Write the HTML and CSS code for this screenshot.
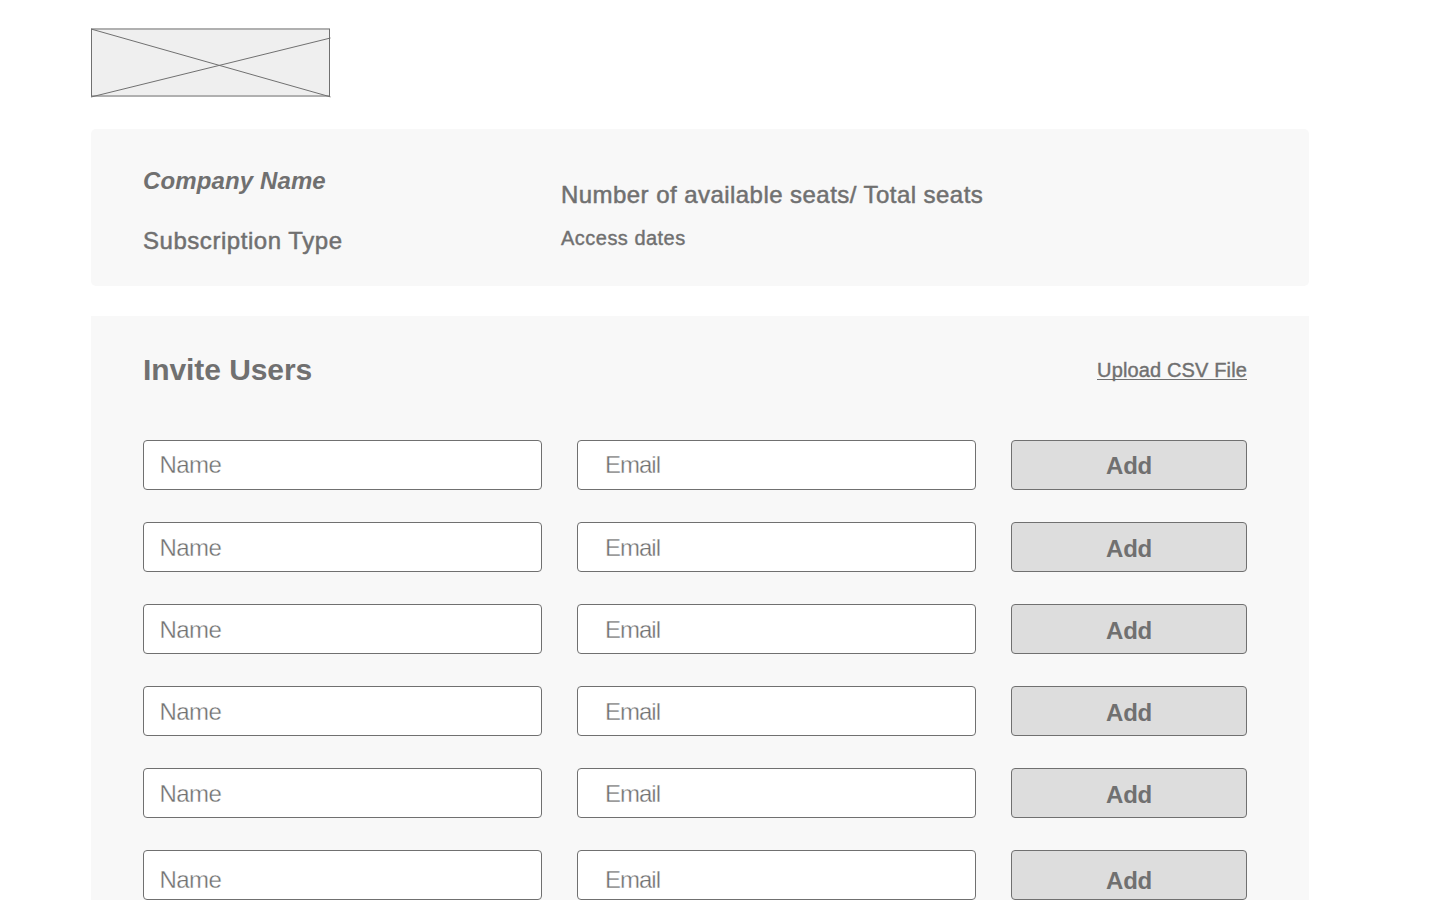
FILE: index.html
```
<!DOCTYPE html>
<html lang="en">
<head>
<meta charset="utf-8">
<title>Invite Users</title>
<link rel="stylesheet" href="styles.css">
</head>
<body>
<main class="page">
  <svg class="logo" width="240" height="70" viewBox="0 0 240 70">
    <rect class="logo-fill" x="0" y="0.5" width="239" height="68"/>
    <path class="logo-edge" d="M0 1H239M0 68H239"/>
    <path class="logo-line" d="M.5 1V68.500M238.500 1V68.500M0 1L239.500 68.900M0 69L239.500 10"/>
  </svg>
  <section class="summary">
    <div class="summary-left">
      <div class="company"><span>Company Name</span></div>
      <div class="subscription"><span>Subscription Type</span></div>
    </div>
    <div class="summary-right">
      <div class="seats"><span>Number of available seats/ Total seats</span></div>
      <div class="dates"><span>Access dates</span></div>
    </div>
  </section>
  <section class="invite">
    <header class="invite-head">
      <h1 class="title"><span>Invite Users</span></h1>
      <a class="upload"><span>Upload CSV File</span></a>
    </header>
    <div class="rows">
      <div class="row first"><div class="field">Name</div><div class="field email">Email</div><div class="add">Add</div></div>
      <div class="row"><div class="field">Name</div><div class="field email">Email</div><div class="add">Add</div></div>
      <div class="row"><div class="field">Name</div><div class="field email">Email</div><div class="add">Add</div></div>
      <div class="row"><div class="field">Name</div><div class="field email">Email</div><div class="add">Add</div></div>
      <div class="row"><div class="field">Name</div><div class="field email">Email</div><div class="add">Add</div></div>
      <div class="row last"><div class="field">Name</div><div class="field email">Email</div><div class="add">Add</div></div>
    </div>
  </section>
</main>
</body>
</html>
```
FILE: styles.css
```
* { box-sizing: border-box; }
body {
  margin: 0;
  background: #fff;
  color: #707070;
  font: 24px/27px "Liberation Sans", Arial, sans-serif;
  white-space: nowrap;
}
.page {
  width: 1309px;
  height: 900px;
  padding: 28px 0 0 91px;
  overflow: hidden;
}
.logo { display: block; margin-bottom: 31px; }
.logo-fill { fill: #efefef; }
.logo-edge { stroke: #b0b0b0; stroke-width: 2; }
.logo-line { fill: none; stroke: #707070; }
.summary {
  display: flex;
  height: 157px;
  margin-bottom: 30px;
  padding: 38px 52px 0;
  border-radius: 5px;
  background: #f8f8f8;
}
.summary-left { display: flex; flex-direction: column; gap: 33px; width: 418px; }
.summary-right { display: flex; flex-direction: column; gap: 19px; padding-top: 14px; }
.company { font-weight: bold; font-style: italic; letter-spacing: 0.12px; }
.subscription, .seats { -webkit-text-stroke: 0.5px #707070; letter-spacing: 0.45px; }
.subscription { letter-spacing: 0.54px; }
.dates, .upload { font-size: 20px; line-height: 22px; -webkit-text-stroke: 0.4px #707070; }
.dates { letter-spacing: 0.48px; }
.invite {
  height: 620px;
  padding: 37px 62px 0 52px;
  background: #f8f8f8;
}
.invite-head {
  display: flex;
  justify-content: space-between;
  height: 33px;
  margin-bottom: 54px;
}
.title { margin: 0; font-size: 30px; line-height: 33px; font-weight: bold; letter-spacing: -0.08px; }
.upload { height: 21px; margin-top: 6px; border-bottom: 1px solid #707070; letter-spacing: 0.14px; }
.rows { display: grid; gap: 32px; }
.row { display: grid; grid-template-columns: 399px 399px 236px; gap: 35px; height: 50px; }
.field, .add { border: 1px solid #707070; border-radius: 4px; }
.field {
  padding: 11px 15.6px 0;
  background: #fff;
  letter-spacing: -0.6px;
  -webkit-text-stroke: 0.35px #fff;
}
.email { padding-left: 27px; letter-spacing: -1px; }
.add {
  padding-top: 12px;
  background: #ddd;
  font-weight: bold;
  letter-spacing: -0.3px;
  text-align: center;
}
.first .field { padding-top: 10px; }
.first .add { padding-top: 11px; }
.last .field { padding-top: 15px; }
.last .add { padding-top: 16px; }
```
